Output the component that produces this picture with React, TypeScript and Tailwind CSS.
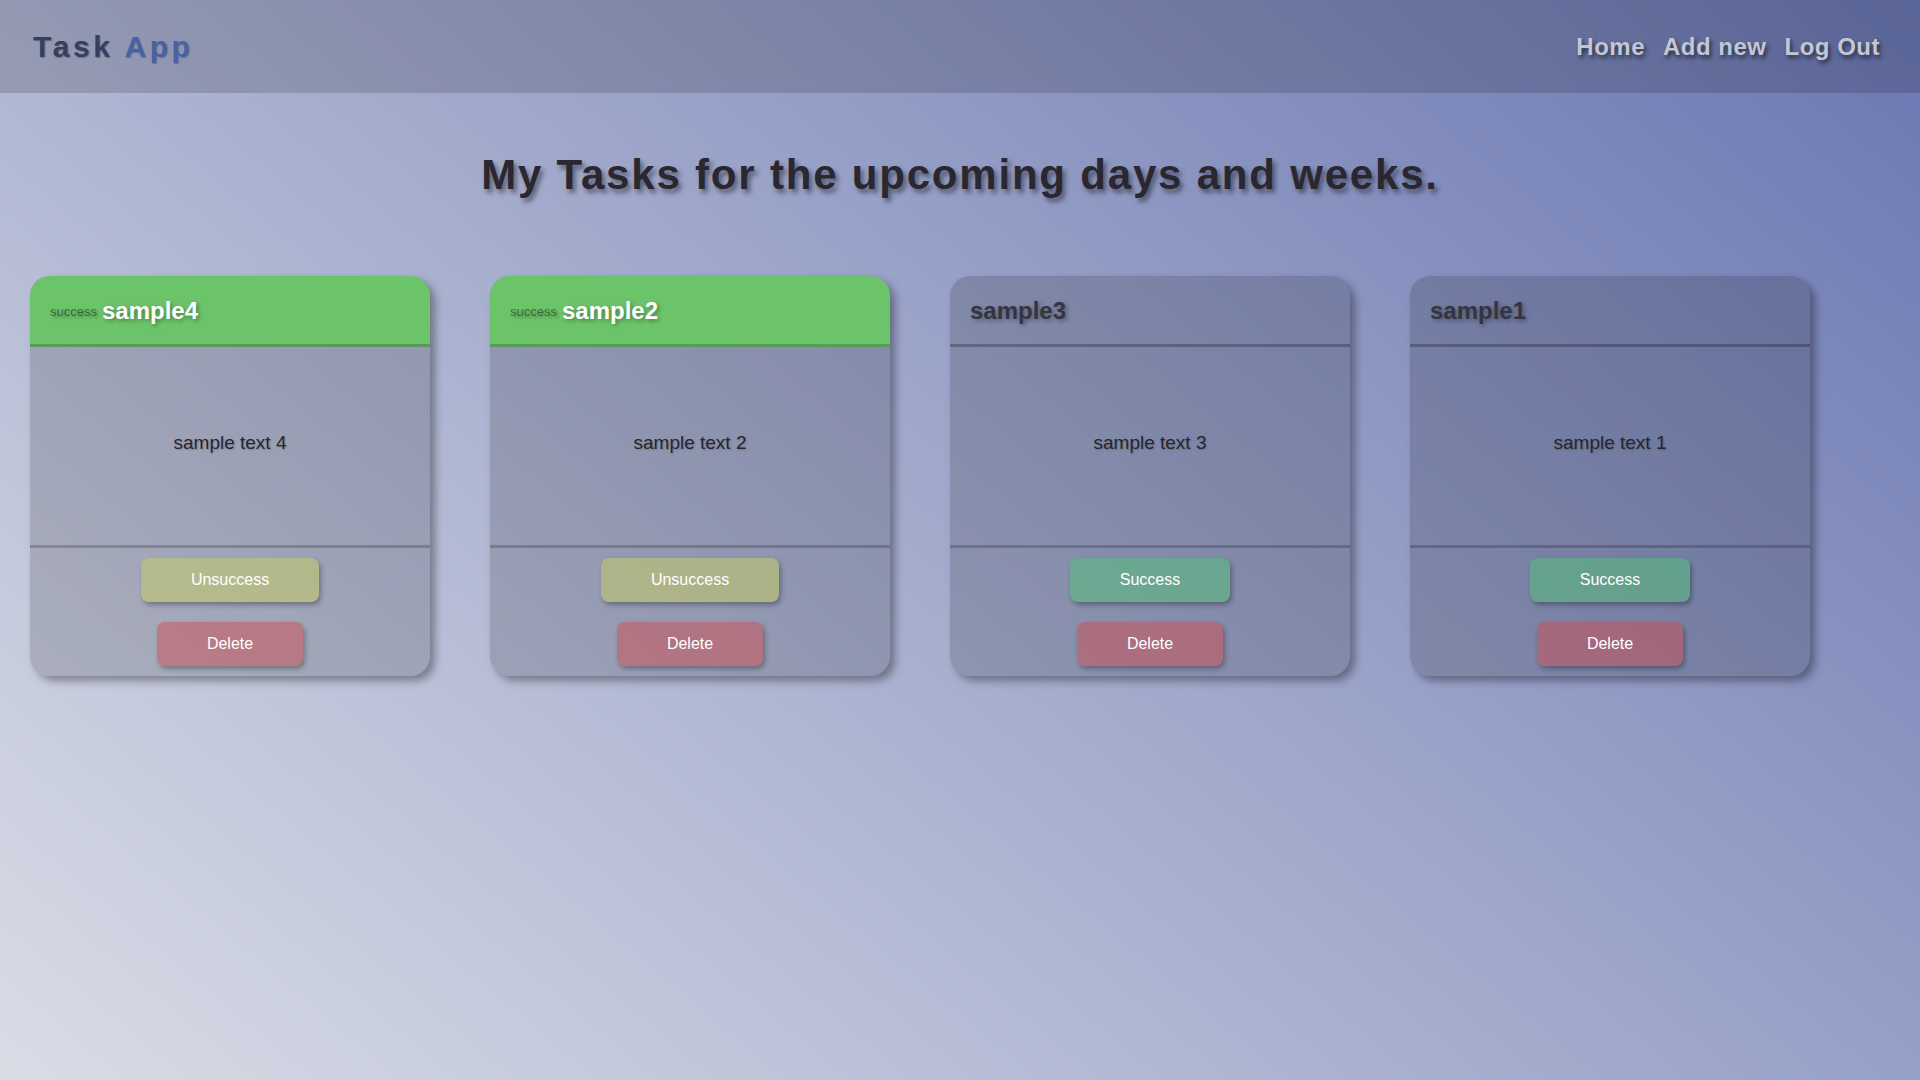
import React from 'react';

type Task = {
    id: number;
    title: string;
    text: string;
    done: boolean;
};

const tasks: Task[] = [
    { id: 4, title: 'sample4', text: 'sample text 4', done: true },
    { id: 2, title: 'sample2', text: 'sample text 2', done: true },
    { id: 3, title: 'sample3', text: 'sample text 3', done: false },
    { id: 1, title: 'sample1', text: 'sample text 1', done: false },
];

const TaskCard = ({ task }: { task: Task }) => {
    return (
        <div className="m-[30px] flex h-[400px] w-[400px] flex-col overflow-hidden rounded-[20px] bg-black/15 shadow-[5px_5px_8px_rgba(0,0,0,0.35)]">
            {task.done ? (
                <div className="flex h-[71px] items-center border-b-[3px] border-[#5a9a58] bg-[#6cc46a] px-5 pt-[2px]">
                    <div className="flex items-center gap-[5px]">
                        <span className="pt-px text-[13px] text-black/45 [text-shadow:2px_2px_3px_rgba(0,0,0,0.3)]">success</span>
                        <span className="text-2xl font-bold text-white [text-shadow:2px_2px_4px_rgba(0,0,0,0.35)]">
                            {task.title}
                        </span>
                    </div>
                </div>
            ) : (
                <div className="flex h-[71px] items-center border-b-[3px] border-black/25 px-5 pt-[2px]">
                    <span className="text-2xl font-bold text-[#34353f] [text-shadow:2px_2px_4px_rgba(0,0,0,0.35)]">
                        {task.title}
                    </span>
                </div>
            )}

            <div className="flex h-[201px] items-center justify-center border-b-[3px] border-black/20 pb-[5px]">
                <p className="text-[19px] text-[#26262e] [text-shadow:1px_1px_2px_rgba(0,0,0,0.2)]">{task.text}</p>
            </div>

            <div className="flex flex-col items-center gap-5 pt-2.5">
                {task.done ? (
                    <button className="h-11 rounded-lg bg-[rgba(200,205,95,0.5)] px-[50px] text-base text-white shadow-[2px_3px_5px_rgba(0,0,0,0.3)]">
                        Unsuccess
                    </button>
                ) : (
                    <button className="h-11 rounded-lg bg-[rgba(82,194,117,0.5)] px-[50px] text-base text-white shadow-[2px_3px_5px_rgba(0,0,0,0.3)]">
                        Success
                    </button>
                )}
                <button className="h-11 rounded-lg bg-[rgba(205,78,82,0.5)] px-[50px] text-base text-white shadow-[2px_3px_5px_rgba(0,0,0,0.3)]">
                    Delete
                </button>
            </div>
        </div>
    );
};

export default function App() {
    return (
        <div className="min-h-screen bg-[linear-gradient(40deg,#dadde6_0%,#6a77b2_100%)] font-['Liberation_Sans',Arial,sans-serif]">
            <header className="flex h-[93px] items-center justify-between bg-black/15 pl-[33px] pr-[40px]">
                <div className="text-[30px] font-bold tracking-[3.6px] [text-shadow:1px_1px_1px_rgba(0,0,0,0.25)]">
                    <span className="text-[#363f5f]">Task </span>
                    <span className="text-[#4862a8]">App</span>
                </div>
                <nav className="flex gap-[18px] text-2xl font-bold tracking-[0.5px] text-[#c3c6d4] [text-shadow:2px_3px_4px_rgba(0,0,0,0.6)]">
                    <a href="#">Home</a>
                    <a href="#">Add new</a>
                    <a href="#">Log Out</a>
                </nav>
            </header>

            <h1 className="mt-[58px] mb-[47px] text-center text-[42px] leading-[48px] font-bold tracking-[1.8px] text-[#2a2731] [text-shadow:3px_4px_5px_rgba(0,0,0,0.45)]">
                My Tasks for the upcoming days and weeks.
            </h1>

            <div className="flex flex-wrap">
                {tasks.map((task) => (
                    <TaskCard key={task.id} task={task} />
                ))}
            </div>
        </div>
    );
}
